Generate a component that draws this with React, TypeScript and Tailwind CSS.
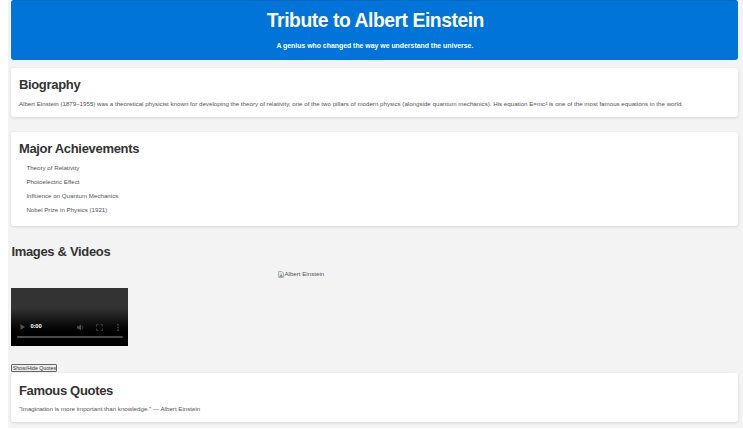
import type { ReactNode } from "react";

function Card({ title, className, children }: { title: string; className: string; children: ReactNode }) {
  return (
    <section className={`rounded-[3px] bg-white px-[7.5px] shadow-[0_1px_3px_rgba(0,0,0,0.12)] ${className}`}>
      <h2 className="whitespace-nowrap text-[13px] font-bold leading-4 tracking-[-0.32px] text-[#333]">{title}</h2>
      {children}
    </section>
  );
}

// A media placeholder with playback controls along its lower edge.
function VideoPlayer() {
  return (
    <div className="mt-[9px] flex h-[58px] w-[116.6px] flex-col justify-end bg-linear-to-b from-[#333] from-35% to-black to-90% pl-[6px] pr-[5px] pb-2">
      <div className="flex h-2 items-center">
        <svg className="ml-[3px] h-[6px] w-[6px]" viewBox="0 0 6 6" fill="#555">
          <path d="M.5.3 5 3 .5 5.7Z" />
        </svg>
        <span className="ml-[4px] -mt-[3px] w-[12px] whitespace-nowrap text-[5.8px] font-bold leading-[6px] tracking-[-0.1px] text-white">0:00</span>
        <svg className="ml-[35px] h-[7px] w-[7px]" viewBox="0 0 7 7" fill="#4b4b4b">
          <path d="M0 2.3h1.6L4 .5v6L1.6 4.7H0Z" />
          <path d="M4.8 1.6q2.3 1.9 0 3.8" fill="none" stroke="#4b4b4b" strokeWidth=".8" />
        </svg>
        <svg className="ml-[12px] h-[7px] w-[7px]" viewBox="0 0 7 7" fill="none" stroke="#3a3a3a">
          <path d="M.5 2.5v-2h2M4.5.5h2v2M6.5 4.5v2h-2M2.5 6.5h-2v-2" />
        </svg>
        <svg className="ml-[13px] h-[7px] w-[4px]" viewBox="0 0 4 7" fill="#555">
          <path d="M1.3 0h1.3v1.4H1.3ZM1.3 2.8h1.3v1.4H1.3ZM1.3 5.6h1.3V7H1.3Z" />
        </svg>
      </div>
      <div className="mt-[5px] h-[2px] shrink-0 rounded-full bg-[#4a4a4a]" />
    </div>
  );
}

const achievements = [
  "Theory of Relativity",
  "Photoelectric Effect",
  "Influence on Quantum Mechanics",
  "Nobel Prize in Physics (1921)",
];

export default function App() {
  return (
    <div className="h-[430px] w-[743px] overflow-hidden bg-white pl-2 font-['Liberation_Sans',Arial,sans-serif] text-[6.18px] text-[#555]">
      <main className="h-[428px] bg-[#f3f3f3] pl-[3.4px] pr-[4.6px]">
        <header className="h-[60px] rounded-[3px] border-t border-[#0869bd] bg-[#0074d9] pt-[9px] text-center font-bold text-white">
          <h1 className="pl-[1px] text-[19.3px] leading-[22px] tracking-[-0.44px]">Tribute to Albert Einstein</h1>
          <p className="mt-[10px] text-[6.9px] leading-[8px]">A genius who changed the way we understand the universe.</p>
        </header>

        <Card title="Biography" className="mt-2 h-[49px] pt-[9px]">
          <p className="mt-[7px] whitespace-nowrap leading-[8px]">
            Albert Einstein (1879–1955) was a theoretical physicist known for developing the theory of relativity, one of the two pillars of modern physics (alongside quantum mechanics). His equation E=mc² is one of the most famous equations in the world.
          </p>
        </Card>

        <Card title="Major Achievements" className="mt-[15px] h-[94px] pt-[9px]">
          <ul className="mt-[4px] pl-[7.5px]">
            {achievements.map((item) => (
              <li key={item} className="leading-[14px]">{item}</li>
            ))}
          </ul>
        </Card>

        <h2 className="mt-[18px] text-[13px] font-bold leading-4 tracking-[-0.32px] text-[#333]">Images &amp; Videos</h2>
        <div className="ml-[267px] mt-[9px] flex h-[10px] items-center">
          <svg className="h-[7px] w-[6px]" viewBox="0 0 6 7">
            <path d="M.5.5h3.5l1.5 1.5v4.5h-5Z" fill="#d6e6f5" stroke="#999" strokeWidth=".7" />
            <path d="M1 5.8 3.2 3.2 5 5.8Z" fill="#56a34c" />
          </svg>
          <span className="whitespace-nowrap leading-[8px]">Albert Einstein</span>
        </div>
        <VideoPlayer />

        <button className="mt-[18px] flex h-[8px] w-[46px] items-center justify-center whitespace-nowrap rounded-[1px] border border-[#666] bg-[#efefef] text-[5.2px] leading-[6px] text-[#333]">
          Show/Hide Quotes
        </button>
        <Card title="Famous Quotes" className="mt-[1px] h-[49px] pt-[10px]">
          <p className="mt-[6px] whitespace-nowrap leading-[8px]">"Imagination is more important than knowledge." — Albert Einstein</p>
        </Card>
      </main>
    </div>
  );
}
